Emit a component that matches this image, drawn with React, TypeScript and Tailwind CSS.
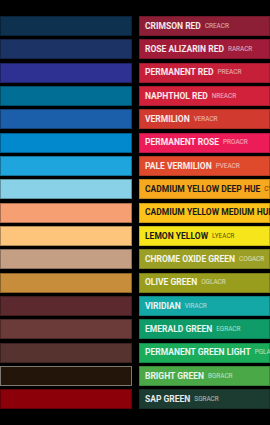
import React from 'react';

interface PaintRow {
  swatch: string;
  name: string;
  code: string;
  bar: string;
  dark?: boolean; // dark text on light bars
  outlined?: boolean;
}

const rows: PaintRow[] = [
  { swatch: 'bg-[#0e3150]', name: 'Crimson Red', code: 'CREACR', bar: 'bg-[#8c1f36]' },
  { swatch: 'bg-[#1c3465]', name: 'Rose Alizarin Red', code: 'RARACR', bar: 'bg-[#a11c39]' },
  { swatch: 'bg-[#2e3192]', name: 'Permanent Red', code: 'PREACR', bar: 'bg-[#c61f3a]' },
  { swatch: 'bg-[#016f95]', name: 'Naphthol Red', code: 'NREACR', bar: 'bg-[#d2213b]' },
  { swatch: 'bg-[#1b5ea9]', name: 'Vermilion', code: 'VERACR', bar: 'bg-[#d13a2e]' },
  { swatch: 'bg-[#0289cd]', name: 'Permanent Rose', code: 'PROACR', bar: 'bg-[#ec1c58]' },
  { swatch: 'bg-[#1fa5dd]', name: 'Pale Vermilion', code: 'PVEACR', bar: 'bg-[#df4a2c]' },
  { swatch: 'bg-[#88d1e6]', name: 'Cadmium Yellow Deep Hue', code: 'CYDACR', bar: 'bg-[#f6a81e]', dark: true },
  { swatch: 'bg-[#f59f72]', name: 'Cadmium Yellow Medium Hue', code: 'CYMACR', bar: 'bg-[#fcc219]', dark: true },
  { swatch: 'bg-[#fdc47c]', name: 'Lemon Yellow', code: 'LYEACR', bar: 'bg-[#f6e51b]', dark: true },
  { swatch: 'bg-[#c49f84]', name: 'Chrome Oxide Green', code: 'COGACR', bar: 'bg-[#9b9f25]' },
  { swatch: 'bg-[#c88d3b]', name: 'Olive Green', code: 'OGLACR', bar: 'bg-[#999d1d]' },
  { swatch: 'bg-[#5c2a2e]', name: 'Viridian', code: 'VIRACR', bar: 'bg-[#13a7a6]' },
  { swatch: 'bg-[#6b3b39]', name: 'Emerald Green', code: 'EGRACR', bar: 'bg-[#0f9c68]' },
  { swatch: 'bg-[#56332f]', name: 'Permanent Green Light', code: 'PGLACR', bar: 'bg-[#1bac5b]' },
  { swatch: 'bg-[#24150a]', name: 'Bright Green', code: 'BGRACR', bar: 'bg-[#4ba846]', outlined: true },
  { swatch: 'bg-[#8b0009]', name: 'Sap Green', code: 'SGRACR', bar: 'bg-[#1c3b31]' },
];

const App: React.FC = () => {
  return (
    <div className="w-[270px] h-[425px] overflow-hidden bg-black pt-[16px]" style={{ fontFamily: 'Roboto, "Liberation Sans", sans-serif' }}>
      <div className="flex flex-col gap-[3.33px]">
        {rows.map(row => (
          <div key={row.code} className="flex h-[20px] gap-[7px]">
            <div
              className={`w-[132px] shrink-0 border ${row.outlined ? 'border-[#7a7a72]' : 'border-black/30'} ${row.swatch}`}
            />
            <div
              className={`flex-1 min-w-0 flex items-center gap-[4px] pl-[5px] border border-black/20 whitespace-nowrap ${row.bar} ${row.dark ? 'text-[#1a1a1a]' : 'text-white/90'}`}
            >
              <span className="text-[8.5px] font-bold uppercase leading-none">{row.name}</span>
              <span className={`text-[6.4px] uppercase leading-none ${row.dark ? 'text-black/70' : 'text-white/65'}`}>{row.code}</span>
            </div>
          </div>
        ))}
      </div>
    </div>
  );
};

export default App;
